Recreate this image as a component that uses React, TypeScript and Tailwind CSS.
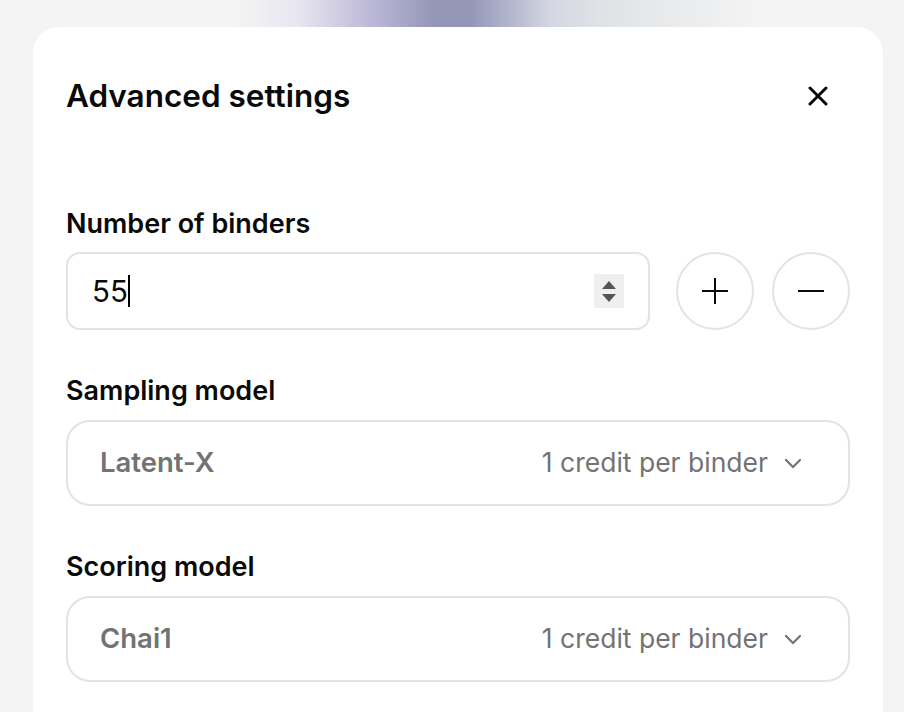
import React from 'react'

function Chevron() {
  return (
    <svg width="18" height="11" viewBox="0 0 18 11" fill="none">
      <path d="M2 2l7 7 7-7" stroke="#737373" strokeWidth="2.2" strokeLinecap="round" strokeLinejoin="round" />
    </svg>
  )
}

function ModelSelect({ name }: { name: string }) {
  return (
    <div className="flex h-[86px] w-full items-center justify-between rounded-[24px] border-2 border-[#e3e3e3] pl-[32px] pr-[46px]">
      <span className="text-[27.5px] font-semibold text-[#737373]">{name}</span>
      <span className="flex items-center gap-[16px] text-[26.5px] text-[#737373]">
        1 credit per binder
        <Chevron />
      </span>
    </div>
  )
}

function Label({ children }: { children: React.ReactNode }) {
  return <div className="text-[27px] font-semibold leading-[32px] text-[#0a0a0a]">{children}</div>
}

export default function App() {
  return (
    <div className="h-[712px] overflow-hidden bg-[#f4f4f4]" style={{ fontFamily: 'Inter, "Noto Sans", sans-serif' }}>
      <div className="h-[27px] bg-[linear-gradient(90deg,#f4f4f4_26%,#e8e6f0_33%,#bcb8d8_41%,#9597b8_48%,#9597b8_52%,#b0b3cb_56%,#d5d8e2_61%,#e0e3e6_67%,#f4f4f4_84%)]" />
      <div className="ml-[33px] mr-[21px] h-[700px] rounded-t-[26px] bg-white px-[33px]">
        <div className="flex h-[138px] items-center justify-between">
          <h1 className="text-[31.5px] font-semibold leading-[34px] text-[#0a0a0a]">Advanced settings</h1>
          <svg width="20" height="20" viewBox="0 0 20 20" className="mr-[22px]">
            <path d="M2 2l16 16M18 2L2 18" stroke="#0a0a0a" strokeWidth="3" strokeLinecap="round" />
          </svg>
        </div>

        <div className="mt-[43px]">
          <Label>Number of binders</Label>
          <div className="mt-[12px] flex items-center gap-[18px]">
            <div className="mr-[8px] flex h-[78px] flex-1 items-center rounded-[14px] border-2 border-[#e3e3e3] pl-[24px] pr-[24px]">
              <span className="text-[29.5px] text-[#0a0a0a]">55</span>
              <span className="h-[32px] w-[2px] bg-black" />
              <div className="ml-auto flex h-[34px] w-[30px] flex-col items-center justify-center gap-[5px] bg-[#efefef]">
                <svg width="14" height="8" viewBox="0 0 14 8"><path d="M7 0L14 8H0z" fill="#555" /></svg>
                <svg width="14" height="8" viewBox="0 0 14 8"><path d="M0 0h14L7 8z" fill="#555" /></svg>
              </div>
            </div>
            <button className="flex h-[78px] w-[78px] items-center justify-center rounded-full border-2 border-[#e3e3e3]">
              <svg width="26" height="26" viewBox="0 0 26 26">
                <path d="M13 0v26M0 13h26" stroke="#0a0a0a" strokeWidth="2" />
              </svg>
            </button>
            <button className="flex h-[78px] w-[78px] items-center justify-center rounded-full border-2 border-[#e3e3e3]">
              <svg width="26" height="26" viewBox="0 0 26 26">
                <path d="M0 13h26" stroke="#0a0a0a" strokeWidth="2" />
              </svg>
            </button>
          </div>
        </div>

        <div className="mt-[45px]">
          <Label>Sampling model</Label>
          <div className="mt-[13px]">
            <ModelSelect name="Latent-X" />
          </div>
        </div>

        <div className="mt-[45px]">
          <Label>Scoring model</Label>
          <div className="mt-[13px]">
            <ModelSelect name="Chai1" />
          </div>
        </div>
      </div>
    </div>
  )
}
